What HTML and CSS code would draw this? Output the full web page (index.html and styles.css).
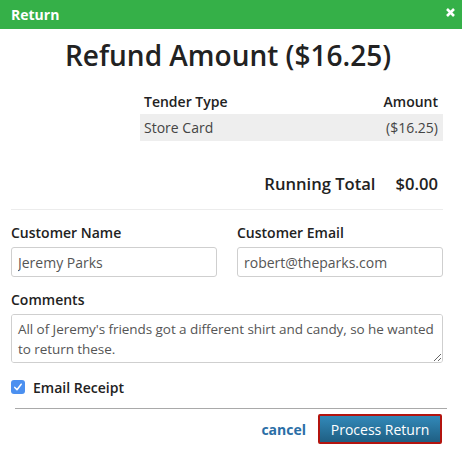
FILE: index.html
```html
<!DOCTYPE html>
<html>
<head>
<meta charset="utf-8">
<link rel="stylesheet" href="styles.css">
</head>
<body>
<div class="modal">
  <div class="header">
    <span class="header-title">Return</span>
    <svg class="close" width="9" height="9" viewBox="0 0 9 9"><path d="M1 1 L8 8 M8 1 L1 8" stroke="#fff" stroke-width="2.6" stroke-linecap="butt"/></svg>
  </div>
  <div class="content">
    <h1 class="title">Refund Amount ($16.25)</h1>
    <table class="tenders">
      <thead>
        <tr><th class="left">Tender Type</th><th class="right">Amount</th></tr>
      </thead>
      <tbody>
        <tr class="shaded"><td class="left">Store Card</td><td class="right">($16.25)</td></tr>
      </tbody>
    </table>
    <div class="running">
      <span>Running Total</span>
      <span>$0.00</span>
    </div>
    <div class="sep"></div>
    <div class="row2">
      <div class="field">
        <label class="lbl">Customer Name</label>
        <input class="inp" type="text" value="Jeremy Parks">
      </div>
      <div class="field">
        <label class="lbl">Customer Email</label>
        <input class="inp" type="text" value="robert@theparks.com">
      </div>
    </div>
    <div class="field comments">
      <label class="lbl">Comments</label>
      <textarea class="ta">All of Jeremy's friends got a different shirt and candy, so he wanted to return these.</textarea>
    </div>
    <div class="check-row">
      <span class="check"><svg width="14" height="14" viewBox="0 0 14 14"><rect x="0" y="0" width="14" height="14" rx="3" fill="#4b90f0"/><path d="M3.8 7.4 L6 9.8 L10.2 4.2" stroke="#fff" stroke-width="1.5" fill="none" stroke-linecap="round" stroke-linejoin="round"/></svg></span>
      <span class="check-label">Email Receipt</span>
    </div>
    <div class="footer-line"></div>
    <div class="actions">
      <a class="cancel">cancel</a>
      <button class="primary">Process Return</button>
    </div>
  </div>
</div>
</body>
</html>
```
FILE: styles.css
```css
html, body {
  margin: 0;
  padding: 0;
  background: #fff;
}
body {
  font-family: "Open Sans", "Noto Sans", sans-serif;
  color: #333;
  width: 462px;
  height: 454px;
  overflow: hidden;
}
.header {
  height: 29px;
  background: #35b048;
  display: flex;
  align-items: center;
  justify-content: space-between;
  padding: 0 7px 0 11px;
}
.header-title {
  color: #fff;
  font-weight: 700;
  font-size: 14px;
}
.close {
  margin-top: -4px;
}
.content {
  padding: 0 19px 0 11px;
}
.title {
  margin: 7px 0 0;
  text-align: center;
  font-size: 28px;
  font-weight: 600;
  line-height: 38px;
  color: #222;
  padding-left: 2px;
}
.tenders {
  margin: 14px 0 0 auto;
  width: 303px;
  border-collapse: collapse;
  font-size: 14px;
}
.tenders th {
  font-weight: 600;
  height: 26px;
  padding: 0 5px 0 4px;
  color: #222;
}
.tenders td {
  height: 27px;
  padding: 0 5px 0 4px;
  color: #444;
}
.left { text-align: left; }
.right { text-align: right; }
.shaded { background: #eeeeee; }
.running {
  display: flex;
  justify-content: flex-end;
  gap: 20px;
  padding-right: 5px;
  margin-top: 31px;
  font-size: 16.6px;
  font-weight: 600;
  line-height: 24px;
  color: #222;
}
.sep {
  height: 1px;
  background: #ececec;
  margin-top: 13px;
}
.row2 {
  display: flex;
  gap: 20px;
  margin-top: 13px;
}
.field {
  display: flex;
  flex-direction: column;
  flex: 1;
}
.lbl {
  font-size: 14px;
  font-weight: 600;
  line-height: 20px;
  color: #222;
  margin-bottom: 4px;
}
.inp {
  box-sizing: border-box;
  height: 30px;
  border: 1px solid #cfcfcf;
  border-radius: 3px;
  padding: 0 6px;
  font-family: "Open Sans", sans-serif;
  font-size: 14px;
  color: #555;
  margin: 0;
}
.comments {
  margin-top: 13px;
}
.ta {
  box-sizing: border-box;
  height: 49px;
  border: 1px solid #cfcfcf;
  border-radius: 3px;
  padding: 4px 3px 4px 6px;
  font-family: "Open Sans", sans-serif;
  font-size: 13.5px;
  letter-spacing: -0.06px;
  line-height: 20px;
  color: #555;
  margin: 0;
  resize: vertical;
}
.check-row {
  display: flex;
  align-items: center;
  gap: 8px;
  margin-top: 14px;
  height: 20px;
}
.check {
  display: flex;
  width: 14px;
  height: 14px;
}
.check-label {
  font-size: 14px;
  font-weight: 600;
  color: #222;
}
.footer-line {
  height: 1px;
  background: #a9a9a9;
  margin: 11px -4px 0 4px;
}
.actions {
  display: flex;
  justify-content: flex-end;
  align-items: center;
  gap: 12px;
  margin-top: 5px;
  padding-right: 1px;
}
.cancel {
  color: #2a6ea6;
  font-weight: 700;
  font-size: 14px;
}
.primary {
  box-sizing: border-box;
  height: 30px;
  width: 124px;
  border: 2px solid #b3140f;
  border-radius: 2px;
  background: linear-gradient(#3289b9, #1f5f83);
  color: #fff;
  font-family: "Open Sans", sans-serif;
  font-size: 14px;
  padding: 0;
  margin: 0;
}
```
